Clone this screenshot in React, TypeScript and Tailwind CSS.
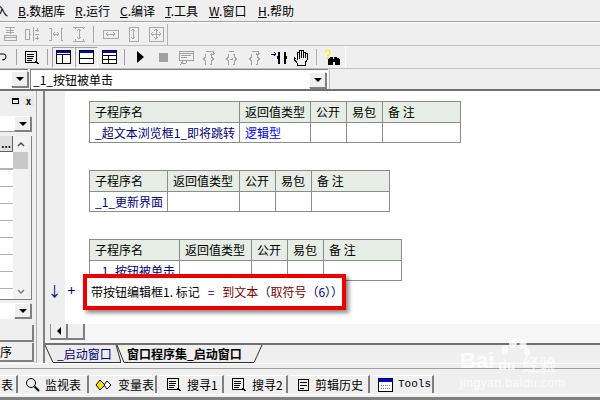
import React from 'react';

const FONT = '"Noto Sans CJK SC", "Liberation Sans", sans-serif';

const MENUS = [
  { key: 'B', label: '.数据库', w: 'w-[57px]' },
  { key: 'R', label: '.运行', w: 'w-[45px]' },
  { key: 'C', label: '.编译', w: 'w-[45px]' },
  { key: 'T', label: '.工具', w: 'w-[44px]' },
  { key: 'W', label: '.窗口', w: 'w-[49px]' },
  { key: 'H', label: '.帮助', w: 'w-[40px]' },
];

function ProcTable({ cols, name, type }: { cols: number[]; name: string; type?: string }) {
  const heads = ['子程序名', '返回值类型', '公开', '易包', '备 注'];
  return (
    <table className="table-fixed border-collapse text-[12px] leading-none" style={{ width: cols.reduce((a, b) => a + b, 0) + 1 }}>
      <colgroup>
        {cols.map((c, i) => <col key={i} style={{ width: c }} />)}
      </colgroup>
      <tbody>
        <tr className="h-[21px] bg-[#e6ede4]">
          {heads.map(h => <td key={h} className="border border-[#8c8c8c] pl-[5px] text-black whitespace-nowrap overflow-hidden">{h}</td>)}
        </tr>
        <tr className="h-[20px] bg-white">
          <td className="border border-[#8c8c8c] pl-[5px] text-[#000080] whitespace-nowrap overflow-hidden">{name}</td>
          <td className="border border-[#8c8c8c] pl-[5px] text-[#0000ff]">{type}</td>
          <td className="border border-[#8c8c8c]" />
          <td className="border border-[#8c8c8c]" />
          <td className="border border-[#8c8c8c]" />
        </tr>
      </tbody>
    </table>
  );
}

function Grey({ d, w = 16, className }: { d: string; w?: number; className?: string }) {
  return (
    <svg width={w} height="16" viewBox={`0 0 ${w} 16`} fill="none" stroke="#a8a8a8" strokeWidth="1" shapeRendering="crispEdges" className={`shrink-0 ${className ?? ''}`}>
      <path d={d} />
    </svg>
  );
}

function PaneIcon({ kind }: { kind: number }) {
  return (
    <svg width="15" height="14" viewBox="0 0 15 14" shapeRendering="crispEdges" className="shrink-0">
      <rect x="0.5" y="0.5" width="14" height="13" fill="#fff" stroke="#000" />
      <rect x="1" y="1" width="13" height="2" fill="#0000e0" />
      {kind === 0 && <path d="M1 4.5H14M6.5 4V13" stroke="#000" />}
      {kind === 1 && <path d="M1 8.5H14" stroke="#000" />}
      {kind === 2 && <path d="M1 5.5H14M1 9.5H14M6.5 5V13" stroke="#000" />}
    </svg>
  );
}

const BRACES = 'M5 4H4V7H3V8H2V9H3V10H4V14H5M9 4H10V7H11V8H12V9H11V10H10V14H9';

function Brace({ arrow, className }: { arrow: string; className: string }) {
  return (
    <svg width="17" height="15" viewBox="0 0 17 15" fill="none" stroke="#a4a4a4" shapeRendering="crispEdges" className={`shrink-0 ${className}`}>
      <path d={BRACES} />
      <path d={arrow} />
    </svg>
  );
}

function ComboArrow({ className }: { className: string }) {
  return (
    <div className={`flex items-center justify-center bg-[#efefef] border border-t-white border-l-white border-r-[#808080] border-b-[#808080] shadow-[1px_1px_0_#808080] ${className}`}>
      <div className="w-0 h-0 border-x-[4px] border-x-transparent border-t-[4px] border-t-black" />
    </div>
  );
}

function BottomTab({ label, icon, className, mono }: { label: string; icon?: React.ReactNode; className: string; mono?: boolean }) {
  return (
    <div className={`h-[18px] flex items-center gap-[5px] shrink-0 border-r-2 border-r-[#808080] border-t border-t-white text-[12px] text-black ${className}`}>
      {icon}
      <span className={mono ? 'text-[11px]' : ''} style={mono ? { fontFamily: '"Liberation Mono", monospace' } : undefined}>{label}</span>
    </div>
  );
}

const SearchIcon = () => (
  <svg width="16" height="15" viewBox="0 0 16 15" fill="none" stroke="#000" shapeRendering="crispEdges" className="shrink-0">
    <path d="M1.5 1.5H12.5V12.5H1.5ZM3 4H10M3 6H10M3 8H9M3 10H8M11 11L15 14" />
  </svg>
);

export default function App() {
  return (
    <div className="relative w-[600px] h-[400px] overflow-hidden bg-[#efefef] flex flex-col text-[12px]" style={{ fontFamily: FONT }}>
      {/* menu */}
      <div className="h-[22px] shrink-0 flex items-center border-b border-b-[#a0a0a0] leading-none text-[12px] text-black">
        <span className="w-[18px] -ml-[4px]">入</span>
        <div className="flex ml-[4px]">
          {MENUS.map(m => (
            <div key={m.key} className={`${m.w} whitespace-nowrap`}><span className="underline">{m.key}</span>{m.label}</div>
          ))}
        </div>
      </div>

      {/* toolbar 1 */}
      <div className="h-[23px] shrink-0 border-t border-t-white flex items-center">
        <div className="w-[168px] h-[21px] border-r border-r-[#b4b4b4] flex items-center">
          <Grey className="ml-[2px]" d="M3 1H13M8 1V6M4 4H12M4 6H12M8 6V8M2 9H14V14H2ZM2 11H14" />
          <Grey className="ml-[6px]" d="M1 3H5V13H1ZM5 8H7M9 1V15M11 4H15M13 2V6M11 8H15M11 12H15M13 10V14" />
          <Grey className="ml-[8px]" d="M1 2H3V14H1M15 2H13V14H15M5 8H11M5 8L7 6M5 8L7 10M11 8L9 6M11 8L9 10" />
          <Grey className="ml-[7px]" d="M2 1H14M2 15H14M4 1V3M12 1V3M4 13V15M12 13V15M8 3V13M6 5L8 3L10 5M6 11L8 13L10 11" />
          <div className="w-px h-[17px] bg-[#a8a8a8] ml-[6px]" />
          <Grey className="ml-[8px]" d="M1 4H16V12H1ZM4 8H13M4 8L6 6M4 8L6 10M13 8L11 6M13 8L11 10" w={17} />
          <Grey className="ml-[9px]" d="M1 1H10V15H1ZM5 3V13M3 5L5 3L7 5M3 11L5 13L7 11" w={11} />
          <Grey className="ml-[9px]" d="M1 1H15V15H1ZM3 8H13M8 3V13M5 6L3 8L5 10M11 6L13 8L11 10M6 5L8 3L10 5M6 11L8 13L10 11" />
        </div>
      </div>

      {/* toolbar 2 */}
      <div className="h-[23px] shrink-0 border-t border-t-[#c0c0c0] flex">
        <div className="w-[346px] h-[23px] border-r border-r-white border-b border-b-white flex items-center">
          <svg width="8" height="12" viewBox="0 0 8 12" fill="none" stroke="#000" className="shrink-0"><path d="M0 3H4Q6 3 6 6Q6 9 2 9" /></svg>
          <div className="w-px h-[16px] bg-[#a0a0a0] ml-[8px]" />
          <svg width="16" height="15" viewBox="0 0 16 15" fill="none" stroke="#000" shapeRendering="crispEdges" className="ml-[7px] shrink-0">
            <path d="M1.5 1.5H12.5V12.5H1.5ZM3 4H10M3 6H10M3 8H9M3 10H8M11 11L15 14" />
          </svg>
          <div className="w-px h-[16px] bg-[#a0a0a0] ml-[7px]" />
          <div className="ml-[4px] w-[23px] h-[21px] flex items-center justify-center border border-t-[#a0a0a0] border-l-[#a0a0a0] border-b-white border-r-white"><PaneIcon kind={0} /></div>
          <div className="w-[23px] h-[21px] flex items-center justify-center border border-t-[#a0a0a0] border-l-[#a0a0a0] border-b-white border-r-white"><PaneIcon kind={1} /></div>
          <div className="w-[23px] h-[21px] flex items-center justify-center"><PaneIcon kind={2} /></div>
          <div className="w-px h-[16px] bg-[#a0a0a0] ml-[3px]" />
          <div className="ml-[12px] w-0 h-0 border-y-[6px] border-y-transparent border-l-[7px] border-l-black" />
          <div className="ml-[15px] w-[9px] h-[9px] bg-[#a0a0a0]" />
          <svg width="16" height="15" viewBox="0 0 16 15" fill="none" stroke="#a0a0a0" shapeRendering="crispEdges" className="ml-[10px] shrink-0">
            <path d="M1 1H15V10H1ZM1 3H15M3 5H13M3 7H9M6 10L3 14L8 13L9 10" />
          </svg>
          <Brace className="ml-[7px]" arrow="M5 1H12V4M10 3L12 5L14 3" />
          <Brace className="ml-[6px]" arrow="M5 1H10M6 9H9M8 8L9 9L8 10" />
          <Brace className="ml-[6px]" arrow="M5 1H11V4M9 3L11 5L13 3" />
          <svg width="17" height="15" viewBox="0 0 17 15" fill="none" shapeRendering="crispEdges" className="ml-[6px] shrink-0">
            <path d="M1 4H6M4 2L6 4L4 6" stroke="#000080" />
            <path d="M10 3H9V7H8V8H9V13H10M14 3H15V7H16V8H15V13H14" stroke="#000" strokeWidth="1.4" />
          </svg>
          <svg width="15" height="17" viewBox="0 0 15 17" fill="none" stroke="#000" shapeRendering="crispEdges" className="ml-[6px] shrink-0">
            <path d="M3 10L1 8V10L4 14V16H12V14L14 11V4H12V9M12 4V3H10V9M10 3V1H8V9M8 1H6V10M6 3H4V11" />
          </svg>
          <div className="w-px h-[16px] bg-[#b0b0b0] ml-[8px]" />
          <svg width="17" height="17" viewBox="0 0 17 17" shapeRendering="crispEdges" className="ml-[7px] shrink-0">
            <path d="M1 1H6V3H7V4H6V6H5V7H3V6H4V5H5V2H2V3H1ZM3 8H5V10H3Z" fill="#ffee00" />
            <path d="M6 8H9V10H10V8H13V9H15V10H16V16H11V13H9V16H4V10H5V9H6Z" fill="#000" />
          </svg>
        </div>
      </div>

      {/* combos */}
      <div className="h-[23px] shrink-0 flex border-t border-t-[#c0c0c0] border-b-2 border-b-[#707070]">
        <div className="w-[28px] h-[20px] flex items-center justify-end bg-white border-b border-b-white border-t border-t-[#808080]">
          <ComboArrow className="w-[17px] h-[16px]" />
        </div>
        <div className="ml-[2px] w-[298px] h-[20px] flex items-center bg-white border-t border-t-[#808080] border-l border-l-[#808080] pr-[2px]">
          <span className="pl-[2px] text-[12px] flex-1 text-black">_1_按钮被单击</span>
          <ComboArrow className="w-[17px] h-[16px]" />
        </div>
        <div className="ml-[1px] w-px h-[20px] bg-[#c0c0c0]" />
      </div>

      {/* main */}
      <div className="flex-1 min-h-0 flex">
        {/* left dock */}
        <div className="w-[37px] shrink-0 border-r border-r-[#b0b0b0] flex flex-col">
          <div className="h-[25px] shrink-0 flex items-start justify-end pt-[5px] pr-[2px] gap-[2px]">
            <div className="w-[11px] h-[10px] bg-[#e8e8e8] flex items-center justify-center"><div className="w-[7px] h-[6px] border border-black border-t-2" /></div>
            <div className="w-[11px] h-[10px] bg-[#e8e8e8] flex items-center justify-center text-[9px] leading-none font-bold">x</div>
          </div>
          <div className="h-[16px] shrink-0 w-[31px] bg-white flex justify-end border-b border-b-[#a0a0a0]">
            <ComboArrow className="w-[17px] h-[15px]" />
          </div>
          <div className="mt-[4px] h-[164px] w-[32px] shrink-0 flex bg-white border-r border-r-[#808080] border-b border-b-[#808080] overflow-hidden">
            <div className="w-[13px] flex flex-col shrink-0">
              <div className="h-[16px] bg-[#e0e0e0] border-r border-b border-[#606060] flex items-center justify-center text-[10px] leading-none font-bold">...</div>
              <div className="h-[18px] shrink-0 border-b-2 border-b-[#b0b0c8]" />
              {[0, 1, 2, 3, 4, 5, 6].map(i => <div key={i} className="h-[17px] shrink-0 border-b border-b-[#b0b0c8]" />)}
            </div>
            <div className="w-[15px] flex flex-col bg-[#f2f2f2]">
              <div className="h-[16px] flex items-center justify-center">
                <svg width="8" height="5" viewBox="0 0 8 5" fill="none" stroke="#505050" strokeWidth="1.5"><path d="M1 4L4 1L7 4" /></svg>
              </div>
              <div className="h-[17px] bg-[#c8c8c8]" />
              <div className="flex-1" />
              <div className="h-[16px] flex items-center justify-center">
                <svg width="8" height="5" viewBox="0 0 8 5" fill="none" stroke="#808080" strokeWidth="1.5"><path d="M1 1L4 4L7 1" /></svg>
              </div>
            </div>
            <div className="w-[3px] bg-[#efefef]" />
          </div>
          <div className="mt-[3px] h-[16px] shrink-0 w-[31px] bg-white flex justify-end">
            <ComboArrow className="w-[17px] h-[15px]" />
          </div>
          <div className="h-[6px] shrink-0" />
          <div className="h-[17px] w-[34px] shrink-0 border-r-2 border-r-[#808080] border-b-2 border-b-[#808080]" />
          <div className="h-[19px] w-[34px] shrink-0 mt-[1px] border-r-2 border-r-[#808080] border-b-2 border-b-[#808080] flex items-center leading-none">序</div>
        </div>

        {/* editor */}
        <div className="ml-[6px] flex-1 min-w-0 flex flex-col border-l-2 border-l-[#808080]">
          <div className="h-[233px] shrink-0 flex">
            <div className="w-[20px] shrink-0 bg-[#efefef]" />
            <div className="flex-1 bg-white pl-[24px] pt-[10px] flex flex-col">
              <ProcTable cols={[150, 71, 36, 36, 78]} name="_超文本浏览框1_即将跳转" type="逻辑型" />
              <div className="mt-[27px]"><ProcTable cols={[78, 72, 36, 36, 78]} name="_1_更新界面" /></div>
              <div className="mt-[27px]"><ProcTable cols={[90, 72, 36, 36, 78]} name="_1_按钮被单击" /></div>
            </div>
          </div>
          <div className="h-[19px] shrink-0 flex items-stretch bg-[#f6f6f6]">
            <div className="w-[6px] border-r border-r-[#909090] bg-[#efefef] mb-[3px]" />
            <div className="w-[17px] mb-[3px] flex items-center justify-center bg-[#efefef] border-r-2 border-r-[#808080] border-b-2 border-b-[#808080]">
              <div className="w-0 h-0 border-y-[4px] border-y-transparent border-r-[4px] border-r-black" />
            </div>
            <div className="w-[17px] mb-[3px] bg-[#efefef] border-r-2 border-r-[#808080] border-b-2 border-b-[#808080]" />
          </div>
          <div className="h-[20px] shrink-0 flex border-t-2 border-t-[#707070] text-[12px] leading-none">
            <div className="relative w-[76px] h-[18px] shrink-0 flex items-center pl-[12px] text-[#000080]">
              <svg width="76" height="18" viewBox="0 0 76 18" className="absolute left-0 top-0">
                <path d="M0 0L8 17.5H76L71 0" fill="#ececec" stroke="#303030" />
              </svg>
              <span className="relative">_启动窗口</span>
            </div>
            <div className="relative -ml-[4px] w-[146px] h-[18px] shrink-0 flex items-center pl-[10px] font-bold text-black whitespace-nowrap">
              <svg width="146" height="18" viewBox="0 0 146 18" className="absolute left-0 top-0">
                <path d="M0 0L7 17.5H137L145 0" fill="#efefef" stroke="#303030" />
              </svg>
              <span className="relative">窗口程序集_启动窗口</span>
            </div>
          </div>
        </div>
      </div>

      {/* bottom tabs */}
      <div className="h-[34px] shrink-0 border-t border-t-white flex flex-col">
        <div className="h-[5px] shrink-0 border-b border-b-[#a0a0a0]" />
        <div className="mt-[6px] flex items-center">
          <BottomTab label="表" className="w-[19px] -ml-[1px] pl-[2px]" />
          <BottomTab label="监视表" className="w-[70px] pl-[6px] ml-[1px]" icon={
            <svg width="15" height="15" viewBox="0 0 15 15" fill="none" stroke="#000" className="shrink-0"><circle cx="6" cy="6" r="4.5" /><path d="M9.5 9.5L14 14" strokeWidth="2" /></svg>
          } />
          <BottomTab label="变量表" className="w-[66px] pl-[4px] ml-[2px]" icon={
            <svg width="18" height="12" viewBox="0 0 18 12" stroke="#000" className="shrink-0"><path d="M5 1L10 6L5 11L1 6Z" fill="#ffe000" /><path d="M12 2L16 6L12 10L9 6Z" fill="#fff" /></svg>
          } />
          <BottomTab label="搜寻1" className="w-[65px] pl-[7px] ml-[2px]" icon={<SearchIcon />} />
          <BottomTab label="搜寻2" className="w-[62px] pl-[5px] ml-[2px]" icon={<SearchIcon />} />
          <BottomTab label="剪辑历史" className="w-[80px] pl-[7px] ml-[2px]" icon={
            <svg width="13" height="14" viewBox="0 0 13 14" fill="none" stroke="#000" shapeRendering="crispEdges" className="shrink-0"><path d="M1.5 1.5H11.5V12.5H1.5ZM3 4H10M3 7H10M3 10H7" /></svg>
          } />
          <BottomTab label="Tools" mono className="w-[62px] pl-[6px] ml-[2px]" icon={
            <svg width="15" height="14" viewBox="0 0 15 14" shapeRendering="crispEdges" className="shrink-0"><rect x="0.5" y="0.5" width="14" height="13" fill="#fff" stroke="#000" /><rect x="1" y="1" width="13" height="3" fill="#0000e0" /><path d="M3 7H12M3 10H12" stroke="#808080" strokeDasharray="1 1" /></svg>
          } />
        </div>
        <div className="flex-1 mt-[1px] border-t border-t-white" />
      </div>
      <div className="h-[3px] shrink-0 bg-[#808080]" />

      {/* code line gutter marks */}
      <div className="absolute left-[46px] top-[282px] flex items-center text-[14px] leading-none h-[16px] whitespace-nowrap text-[#000080]">
        <span className="w-[17px] text-center">↓</span>
        <span className="w-[17px] text-center">+</span>
      </div>

      {/* red annotation box */}
      <div className="absolute left-[83px] top-[274px] w-[263px] h-[36px] bg-white border-[4px] border-[#ee0000] shadow-[3px_3px_4px_rgba(0,0,0,0.45)] flex items-center pl-[4px] text-[12px] leading-none whitespace-nowrap">
        <span className="text-black">带按钮编辑框1. 标记</span>
        <span className="text-[#000080] ml-[8px]">=</span>
        <span className="text-[#800000] ml-[8px]">到文本</span>
        <span className="text-[#000080]">（</span>
        <span className="text-[#800000]">取符号</span>
        <span className="text-[#000080]">（6））</span>
      </div>

      {/* watermark */}
      <div className="absolute left-[460px] top-[336px] text-white opacity-80 leading-none select-none">
        <svg width="32" height="20" viewBox="0 0 32 20" fill="#fff" className="absolute left-[38px] top-0">
          <ellipse cx="7" cy="14" rx="3.5" ry="4.5" /><ellipse cx="15" cy="7" rx="4" ry="5" /><ellipse cx="25" cy="8" rx="3.5" ry="5" /><ellipse cx="29" cy="16" rx="3" ry="4" />
        </svg>
        <div className="flex items-end mt-[14px]">
          <span className="text-[22px] font-bold" style={{ fontFamily: '"Liberation Sans", sans-serif' }}>Bai</span>
          <span className="text-[14px] font-bold ml-[4px]" style={{ fontFamily: '"Liberation Sans", sans-serif' }}>du</span>
          <span className="text-[17px] ml-[7px]">经验</span>
        </div>
        <div className="text-[12px] mt-[5px] tracking-[0.5px]" style={{ fontFamily: '"Liberation Sans", sans-serif' }}>jingyan.baidu.com</div>
      </div>
    </div>
  );
}
